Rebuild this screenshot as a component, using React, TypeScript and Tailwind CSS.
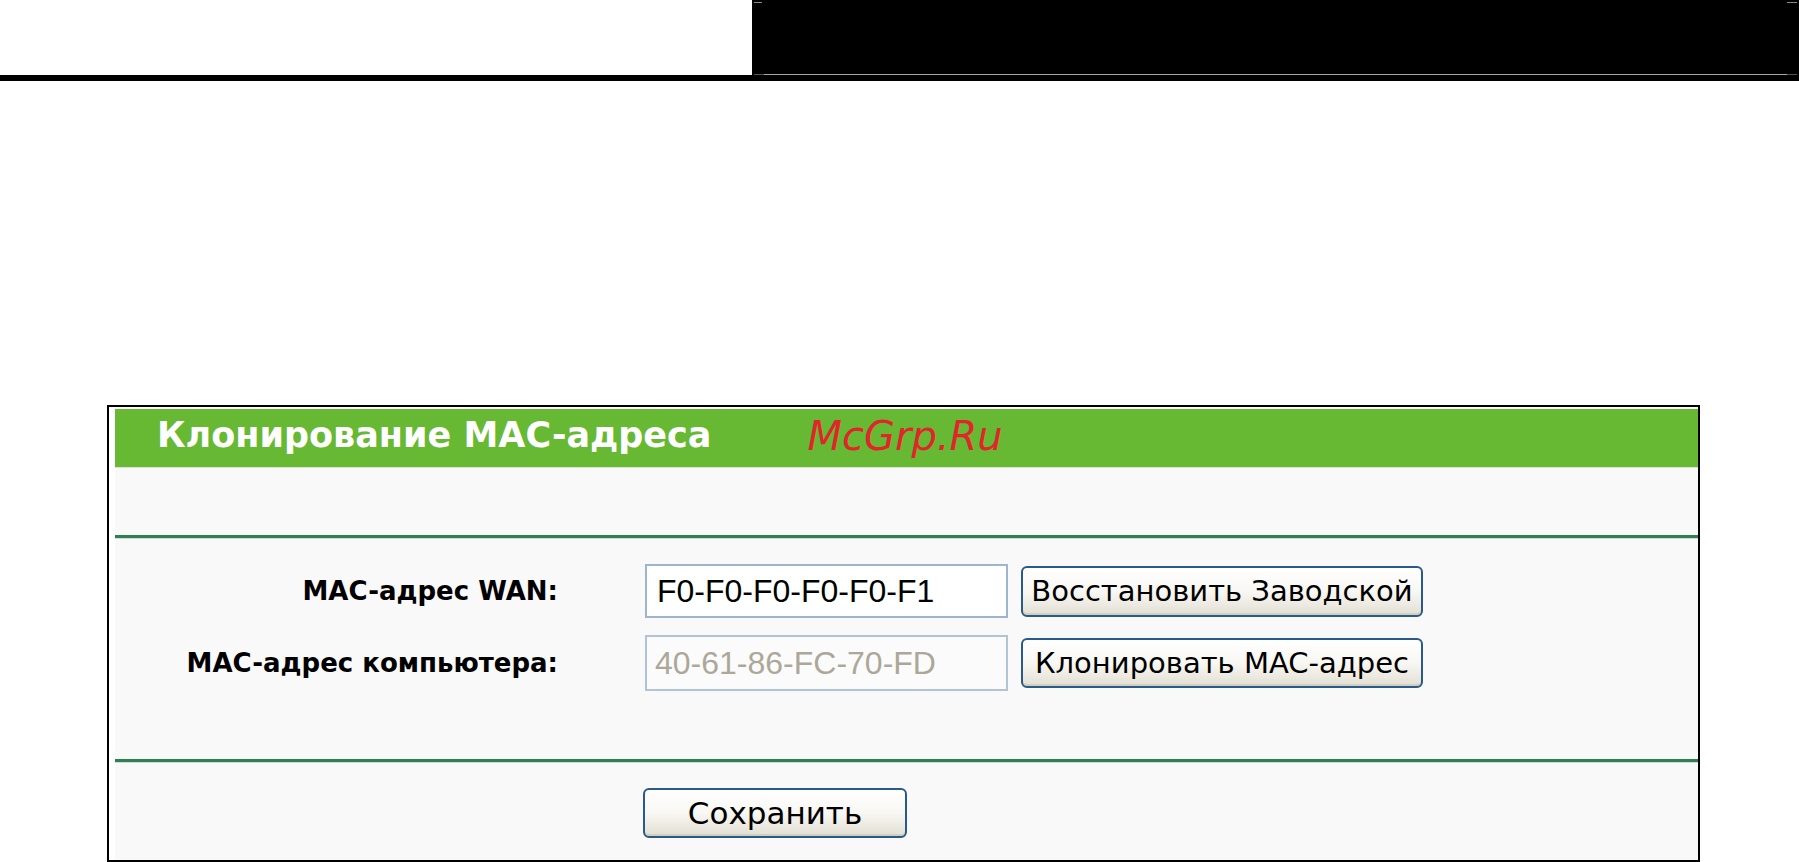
import React from 'react';

const XpButton: React.FC<{ label: string; className?: string }> = ({ label, className = '' }) => (
  <button
    type="button"
    className={`flex items-center justify-center rounded-[6px] border-2 border-[#2a5a8c] bg-gradient-to-b from-white via-[#f8f7f3] to-[#e2dfd3] leading-none text-black shadow-[inset_0_-2px_0_#d3cfbf] ${className}`}
    style={{ fontFamily: '"DejaVu Sans", Tahoma, sans-serif' }}
  >
    {label}
  </button>
);

const GreenRule: React.FC = () => (
  <div className="shrink-0">
    <div className="h-[3px] bg-[#2f7f52]" />
    <div className="h-px bg-[#c9dfd1]" />
  </div>
);

const App: React.FC = () => {
  return (
    <div className="h-[862px] w-[1799px] overflow-hidden bg-white">
      {/* Top banner */}
      <div className="flex h-[75px]">
        <div className="w-[752px] bg-white" />
        <div className="flex flex-1 flex-col justify-between bg-black">
          <div className="flex justify-between px-[2px] pt-[2px]">
            <span className="h-px w-[8px] bg-[#8a8a8a]" />
            <span className="h-px w-[10px] bg-[#8a8a8a]" />
          </div>
          <div className="mx-[2px] flex h-px">
            <span className="w-[10px] bg-[#555]" />
            <span className="flex-1 bg-[#a8a8a8]" />
            <span className="w-[10px] bg-[#555]" />
          </div>
        </div>
      </div>
      <div className="h-[6px] bg-black" />

      {/* Settings panel */}
      <div className="ml-[107px] mt-[324px] h-[457px] w-[1593px] border-2 border-black bg-white pl-[6px] pt-[2px]">
        <div className="flex h-full flex-col bg-[#f9f9f9]">
          <div className="flex h-[59px] shrink-0 items-center border-b border-[#d6e9cc] bg-[#67b934] pl-[42px]">
            <span
              className="pb-[6px] text-[35px] font-bold leading-none text-white"
              style={{ fontFamily: '"DejaVu Sans", Arial, sans-serif' }}
            >
              Клонирование MAC-адреса
            </span>
            <span
              className="ml-[96px] pb-[4px] text-[40px] italic leading-none text-[#e0252b]"
              style={{ fontFamily: '"DejaVu Sans", sans-serif' }}
            >
              McGrp.Ru
            </span>
          </div>

          <div className="h-[67px] shrink-0" />
          <GreenRule />

          <div className="flex h-[220px] shrink-0 flex-col gap-[17px] pt-[25px]">
            <div className="flex h-[54px] items-center">
              <label
                className="w-[443px] text-right text-[26px] font-bold text-black"
                style={{ fontFamily: '"DejaVu Sans", Arial, sans-serif' }}
              >
                MAC-адрес WAN:
              </label>
              <input
                readOnly
                value="F0-F0-F0-F0-F0-F1"
                className="ml-[87px] h-[54px] w-[363px] border-2 border-[#9fb5cf] bg-white pl-[10px] text-[32px] text-black outline-none"
                style={{ fontFamily: '"Liberation Sans", Arial, sans-serif' }}
              />
              <XpButton label="Восстановить Заводской" className="ml-[13px] h-[51px] w-[402px] text-[29px]" />
            </div>
            <div className="flex h-[56px] items-center">
              <label
                className="w-[443px] text-right text-[26px] font-bold text-black"
                style={{ fontFamily: '"DejaVu Sans", Arial, sans-serif' }}
              >
                MAC-адрес компьютера:
              </label>
              <input
                disabled
                value="40-61-86-FC-70-FD"
                className="ml-[87px] h-[56px] w-[363px] border-2 border-[#b3c3d6] bg-[#fbfbfb] pl-[8px] text-[32px] text-[#aca899] outline-none"
                style={{ fontFamily: '"Liberation Sans", Arial, sans-serif' }}
              />
              <XpButton label="Клонировать MAC-адрес" className="ml-[13px] h-[50px] w-[402px] text-[29px]" />
            </div>
          </div>

          <GreenRule />

          <div className="flex pl-[528px] pt-[25px]">
            <XpButton label="Сохранить" className="h-[50px] w-[264px] text-[31px]" />
          </div>
        </div>
      </div>
    </div>
  );
};

export default App;
